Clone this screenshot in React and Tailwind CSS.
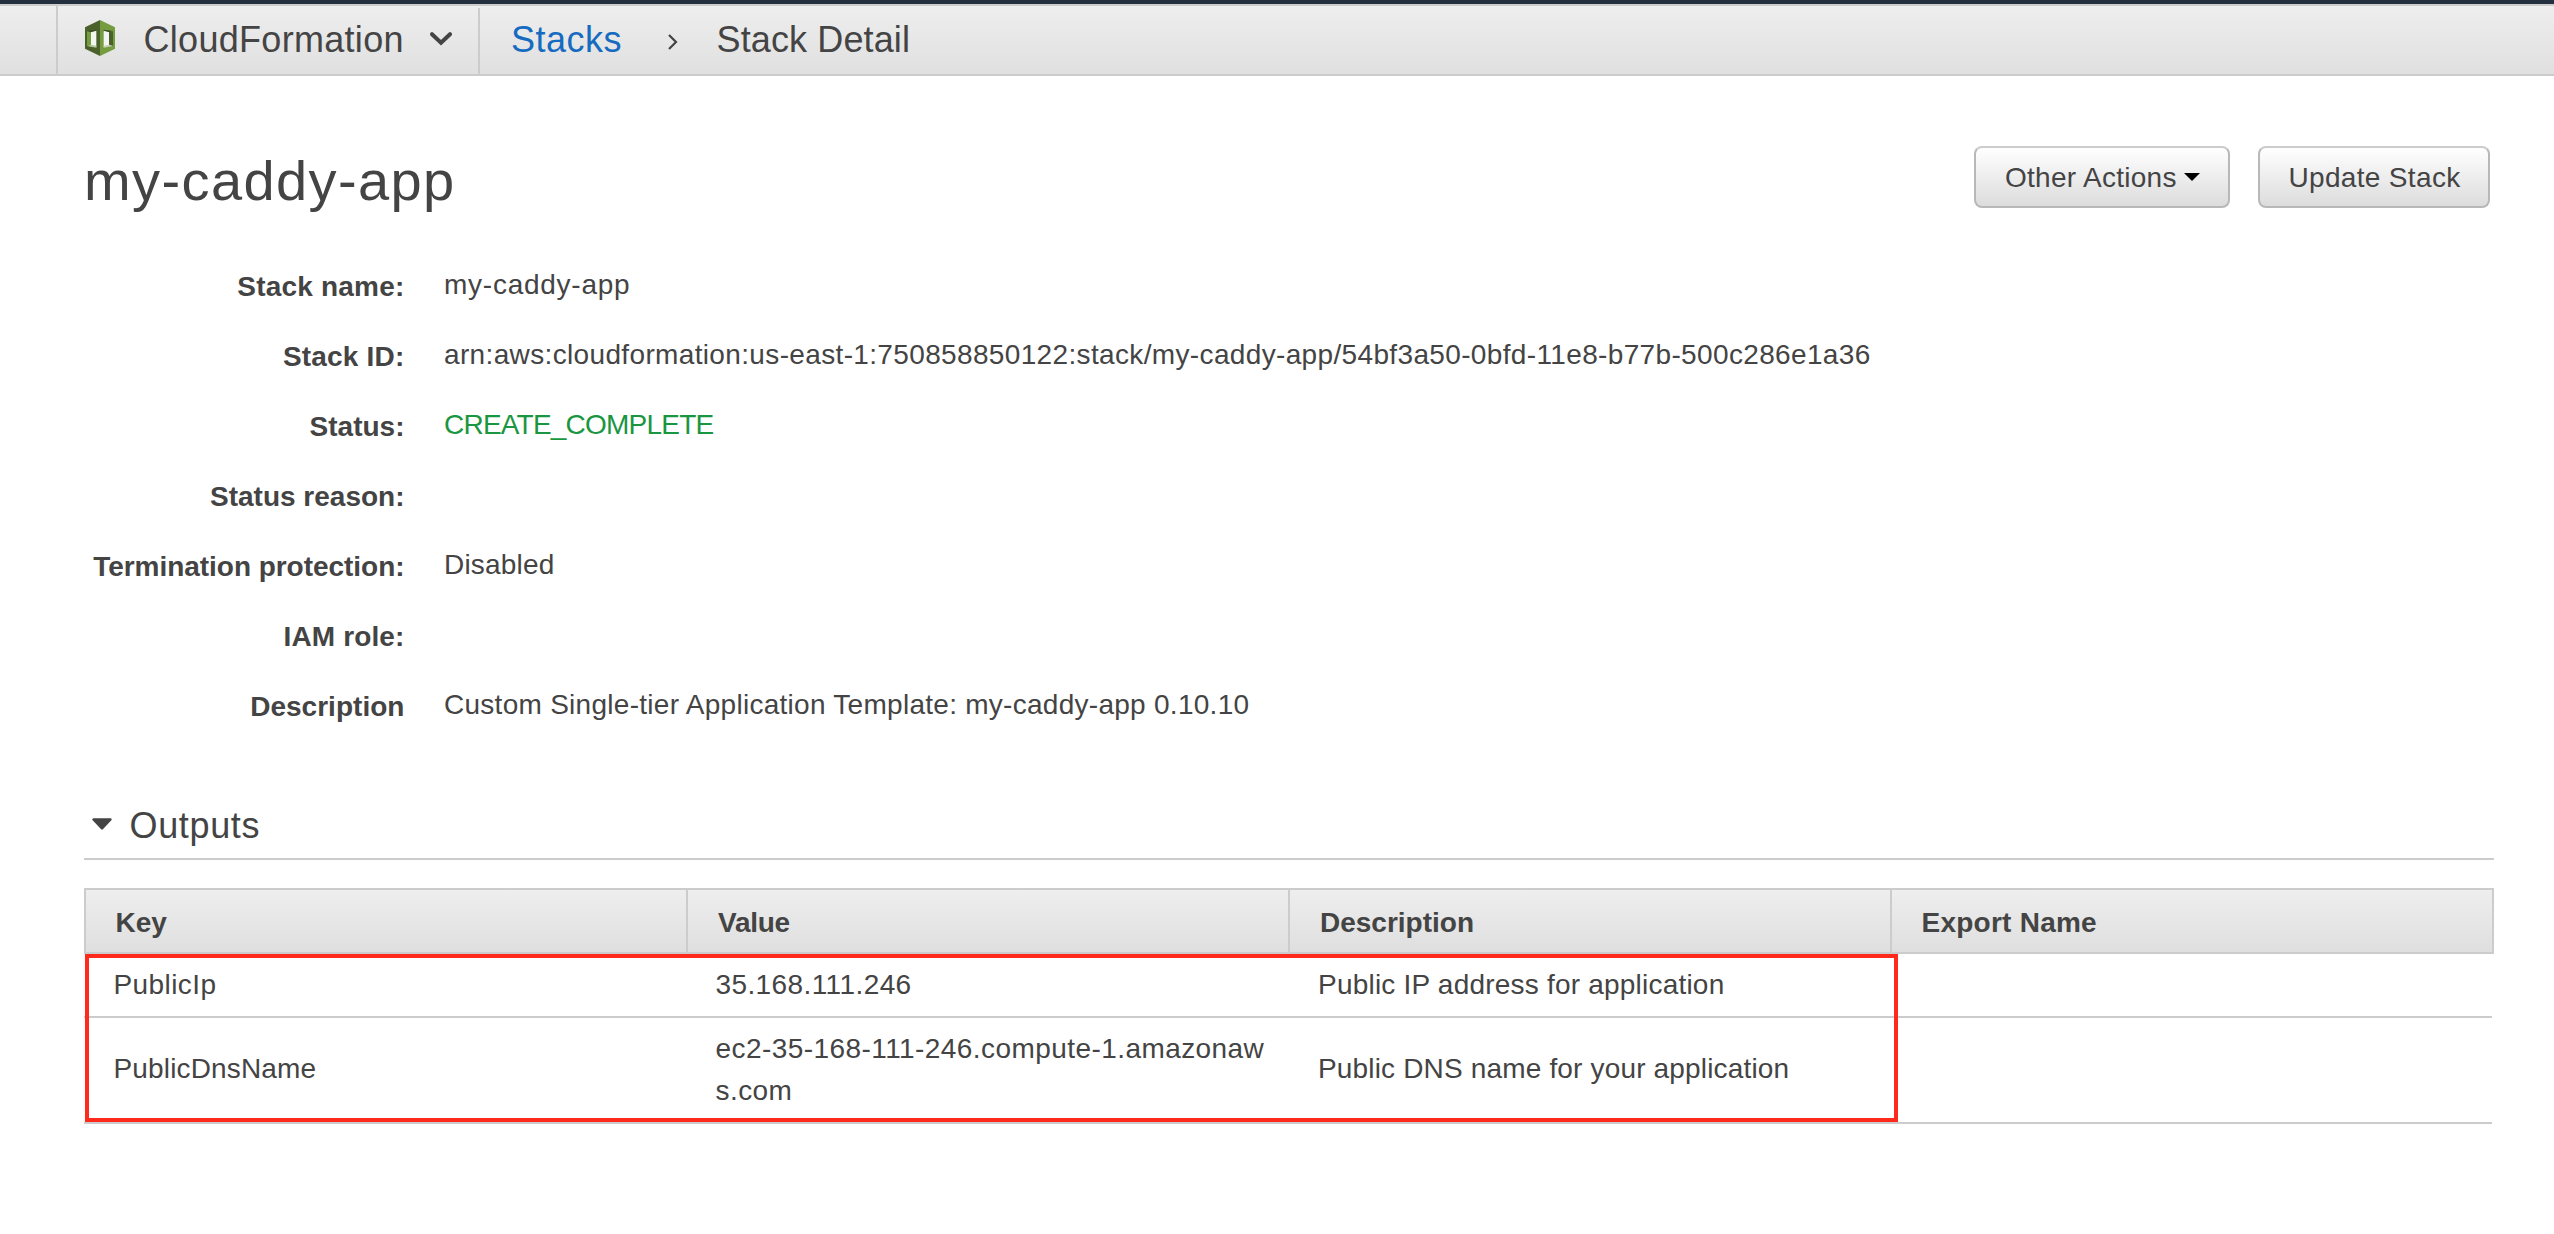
import React from "react";

function StackIcon() {
  return (
    <svg className="h-9 w-[30px] shrink-0" viewBox="0 0 90 108">
      <path d="M0 22 45 0v108L0 86z" fill="#4b612c" />
      <path d="M90 22 45 0v108l45-22z" fill="#759c3e" />
      <path d="M6 33 34 29v7L18 37z" fill="#3a4b20" />
      <path d="M84 33 56 29v7l16 1z" fill="#3a4b20" />
      <path d="M6 34l12 3v37L6 78z" fill="#759c3e" />
      <path d="M18 37l16-5v50l-16-7z" fill="#f4f6f1" />
      <path d="M6 78l12-4 16 3v6z" fill="#b7ca9d" />
      <path d="M84 34l-12 3v37l12 4z" fill="#4b612c" />
      <path d="M72 37l-16-5v50l16-7z" fill="#f4f6f1" />
      <path d="M84 78l-12-4-16 3v6z" fill="#c9d1bd" />
    </svg>
  );
}

const details = [
  { label: "Stack name:", lt: "tracking-[0.2px]", value: "my-caddy-app", vt: "tracking-[0.75px]" },
  {
    label: "Stack ID:",
    lt: "tracking-[0.2px]",
    value:
      "arn:aws:cloudformation:us-east-1:750858850122:stack/my-caddy-app/54bf3a50-0bfd-11e8-b77b-500c286e1a36",
    vt: "tracking-[0.352px]",
  },
  { label: "Status:", lt: "", value: "CREATE_COMPLETE", vt: "tracking-[-0.78px] text-[#1a9641]" },
  { label: "Status reason:", lt: "", value: "", vt: "" },
  { label: "Termination protection:", lt: "tracking-[-0.037px]", value: "Disabled", vt: "tracking-[0.2px]" },
  { label: "IAM role:", lt: "tracking-[0.13px]", value: "", vt: "" },
  {
    label: "Description",
    lt: "tracking-[0.03px]",
    value: "Custom Single-tier Application Template: my-caddy-app 0.10.10",
    vt: "tracking-[0.275px]",
  },
];

const columns = [
  { name: "Key", t: "pl-[29.5px]" },
  { name: "Value", t: "pl-[30px] tracking-[-0.25px]" },
  { name: "Description", t: "pl-[30px]" },
  { name: "Export Name", t: "pl-[29.5px] tracking-[0.246px]" },
];

export default function App() {
  return (
    <div className="min-h-[1234px] w-full bg-white font-['Liberation_Sans',Arial,sans-serif] text-[28px] leading-[42px] text-[#444]">
      <header className="border-t-4 border-[#232f3e]">
        <nav className="flex h-[72px] border-y-2 border-[#ccc] bg-linear-to-b from-[#eee] to-[#e0e0e0] text-[36px] leading-[68px] whitespace-nowrap">
          <div className="w-14 shrink-0" />
          <div className="flex w-[424px] shrink-0 items-center border-l-2 border-[#ccc] pl-[27px]">
            <div className="-mt-3 -mb-1 flex h-9 items-center pt-1">
              <StackIcon />
            </div>
            <span className="ml-[28.5px] tracking-[0.3px]">CloudFormation</span>
            <svg className="mt-[-3px] ml-[26.5px] h-[14px] w-[22px]" viewBox="0 0 22 14" fill="none" stroke="#444" strokeWidth="4">
              <path d="M2 2.2l9 8.6 9-8.6" strokeLinecap="round" />
            </svg>
            <div className="mt-[2px] ml-auto h-[66px] w-[2px] bg-[#ccc]" />
          </div>
          <a className="pl-[31px] tracking-[0.493px] text-[#166bc0]">Stacks</a>
          <svg className="mt-7 ml-[46px] h-4 w-[10px] shrink-0" viewBox="0 0 10 16" fill="none" stroke="#444" strokeWidth="2.2">
            <path d="M1 1l7 7-7 7" />
          </svg>
          <span className="ml-[38.5px] tracking-[0.12px]">Stack Detail</span>
        </nav>
      </header>

      <main className="pr-[60px] pl-[84px]">
        <div className="flex h-[174px] items-start justify-between pr-1">
          <h1 className="pt-[73px] text-[56px] leading-[64px] tracking-[1.4px]">my-caddy-app</h1>
          <div className="flex gap-7 pt-[70px] whitespace-nowrap [text-shadow:0_2px_1px_#fff]">
            <button className="flex h-[62px] w-[256px] items-center rounded-lg border-2 border-[#b8b8b8] border-t-[#ccc] bg-linear-to-b from-white to-[#dcdcdc] pl-[29px] tracking-[0.281px]">
              <span className="pt-[2px]">Other Actions</span>
              <svg className="ml-[7px] h-2 w-4" viewBox="0 0 16 8">
                <path d="M0 0h16L8 8z" fill="#000" />
              </svg>
            </button>
            <button className="flex h-[62px] w-[232px] items-center rounded-lg border-2 border-[#b8b8b8] border-t-[#ccc] bg-linear-to-b from-white to-[#dcdcdc] pl-[28.5px] tracking-[0.328px]">
              <span className="pt-[2px]">Update Stack</span>
            </button>
          </div>
        </div>

        <dl>
          {details.map((d) => (
            <div key={d.label} className="flex h-[70px] items-start whitespace-nowrap">
              <dt className="w-[320.5px] pt-4 text-right font-bold">
                <span className={d.lt}>{d.label}</span>
              </dt>
              <dd className={`ml-[39.5px] pt-[14px] ${d.vt}`}>{d.value}</dd>
            </div>
          ))}
        </dl>

        <section className="pt-[50px]">
          <h2 className="flex h-[70px] items-center border-b-2 border-[#ccc] pl-2 text-[36px]">
            <svg className="h-3 w-5" viewBox="0 0 20 12">
              <path d="M1.5 1.5h17L10 10.5z" fill="#444" stroke="#444" strokeWidth="2.4" strokeLinejoin="round" />
            </svg>
            <span className="ml-[17.5px] pt-[3px] tracking-[0.65px]">Outputs</span>
          </h2>

          <div className="relative mt-7">
            <div className="grid h-[66px] grid-cols-[602px_602px_602px_604px] border-y-2 border-r-2 border-[#ccc] bg-linear-to-b from-[#eee] to-[#dfdfdf] font-bold">
              {columns.map((c) => (
                <div key={c.name} className={`border-l-2 border-[#ccc] pt-3 ${c.t}`}>
                  {c.name}
                </div>
              ))}
            </div>
            <div className="mr-[2px] grid h-16 grid-cols-[602px_603px_1fr] items-center border-b-2 border-[#ccc]">
              <div className="pl-[29.5px] tracking-[0.42px]">PublicIp</div>
              <div className="pl-[29.5px] tracking-[0.4px]">35.168.111.246</div>
              <div className="pl-[29px] tracking-[0.21px]">Public IP address for application</div>
            </div>
            <div className="mr-[2px] grid h-[106px] grid-cols-[602px_603px_1fr] items-center border-b-2 border-[#ccc]">
              <div className="pb-[2px] pl-[29.5px] tracking-[0.15px]">PublicDnsName</div>
              <div className="pl-[29.5px] tracking-[0.43px]">
                ec2-35-168-111-246.compute-1.amazonaw
                <br />
                s.com
              </div>
              <div className="pb-[2px] pl-[29px] tracking-[0.165px]">Public DNS name for your application</div>
            </div>
            <div className="absolute top-[66px] left-px h-[168px] w-[1813px] border-4 border-[#ff2a1c]" />
          </div>
        </section>
      </main>
    </div>
  );
}
